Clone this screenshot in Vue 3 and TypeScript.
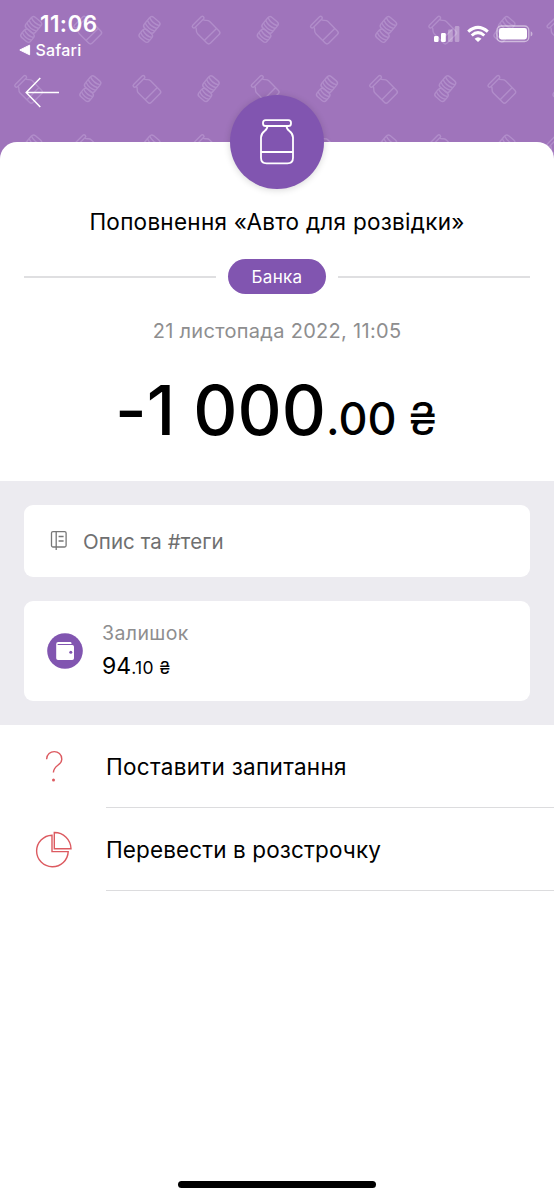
<script setup lang="ts">
interface Mark {
  kind: 'coins' | 'jar'
  x: number
  y: number
}

interface Action {
  id: string
  label: string
}

const marks: Mark[] = []
for (let row = 0; row < 3; row++) {
  for (let col = 0; col < 10; col++) {
    const coins = (row + col) % 2 === 0
    marks.push({
      kind: coins ? 'coins' : 'jar',
      x: (coins ? 31 : 29.3) + col * 59.15,
      y: (coins ? 29.6 : 30.8) + row * 59.2,
    })
  }
}

const actions: Action[] = [
  { id: 'ask', label: 'Поставити запитання' },
  { id: 'split', label: 'Перевести в розстрочку' },
]
</script>

<template>
  <main class="screen">
    <header class="top">
      <svg class="pattern" width="554" height="170" viewBox="0 0 554 170">
        <defs>
          <g id="m-jar">
            <g transform="rotate(-45)">
              <rect x="-7.6" y="-13.8" width="15.2" height="3.2" rx="1.6" />
              <path d="M-5.4 -10.6C-5.4 -7.6 -8.6 -8 -8.6 -4.4V8.8Q-8.6 11.4 -6 11.4H6Q8.6 11.4 8.6 8.8V-4.4C8.6 -8 5.4 -7.6 5.4 -10.6M-8.6 5.2H8.6" />
            </g>
          </g>
          <g id="m-coins">
            <g transform="rotate(40)">
              <rect x="-7.4" y="-12.2" width="12.6" height="14" rx="3" />
              <path d="M-7.4 -9.4Q-1.1 -6.4 5.2 -9.4M-7.4 -5.8Q-1.1 -2.8 5.2 -5.8M-7.4 -2.4Q-1.1 .6 5.2 -2.4" />
              <rect x="-4.8" y="1.8" width="12" height="10.2" rx="3" />
              <path d="M-4.8 4.4Q1.2 7.4 7.2 4.4M-4.8 7.8Q1.2 10.8 7.2 7.8" />
            </g>
          </g>
        </defs>
        <use
          v-for="(m, i) in marks"
          :key="i"
          :href="'#m-' + m.kind"
          :transform="`translate(${m.x} ${m.y})`"
        />
      </svg>
      <div class="status">
        <div class="left">
          <span class="clock">11:06</span>
          <span class="back-app">
            <svg width="12" height="12" viewBox="0 0 12 12"><path d="M.8 6 10.6 1.2V10.8Z" fill="#fff" stroke="#fff" stroke-linejoin="round" /></svg>
            <span>Safari</span>
          </span>
        </div>
        <svg class="indicators" width="100" height="20" viewBox="0 0 100 20">
          <g fill="#fff">
            <rect x="0" y="12" width="4.6" height="6" rx="1.2" />
            <rect x="7" y="9" width="4.8" height="9" rx="1.2" />
            <g opacity=".3">
              <rect x="14" y="5.5" width="4.8" height="12.5" rx="1.2" />
              <rect x="20.8" y="2" width="4.6" height="16" rx="1.2" />
            </g>
            <path d="M40.6 14.7 Q44 11.7 47.5 14.7 L44 18Z" />
            <rect x="65" y="4" width="28" height="11.5" rx="2.4" />
            <path opacity=".45" d="M96.7 7.3 Q98.5 8.2 98.5 9.9 Q98.5 11.6 96.7 12.5Z" />
          </g>
          <g fill="none" stroke="#fff" stroke-width="3">
            <path d="M34.2 7.6 Q44 -.8 53.8 7.6" />
            <path d="M37.7 11.5 Q44 5.8 50.3 11.5" />
          </g>
          <rect x="63" y="2" width="31.8" height="15.5" rx="4.3" fill="none" stroke="#fff" stroke-width="1.3" opacity=".5" />
        </svg>
      </div>
      <svg class="arrow" width="36" height="32" viewBox="0 0 36 32">
        <path d="M34 15.4H1.2M15.3 1 1.2 15.4 15.3 30" fill="none" stroke="#fff" stroke-width="1.5" />
      </svg>
    </header>

    <section class="sheet">
      <div class="badge">
        <svg width="36" height="48" viewBox="0 0 36 48" fill="none" stroke="#fff" stroke-width="1.8">
          <rect x="4" y="2.2" width="28" height="5.8" rx="2.6" />
          <path d="M8.4 8C8.8 13.6 2 12.2 2 19.5V39.8Q2 45.4 7.6 45.4H28.4Q34 45.4 34 39.8V19.5C34 12.2 27.2 13.6 27.6 8M2 34H34" />
        </svg>
      </div>
      <h1 class="title">Поповнення «Авто для розвідки»</h1>
      <div class="category"><span class="rule"></span><span class="pill">Банка</span><span class="rule"></span></div>
      <div class="date">21 листопада 2022, 11:05</div>
      <div class="amount"><span class="whole">-1 000</span><span class="cents">.00</span><span class="currency">₴</span></div>
    </section>

    <section class="details">
      <div class="card note">
        <svg width="18" height="22" viewBox="0 0 18 22" fill="none" stroke="#777" stroke-width="1.3">
          <rect x="1.5" y="1.6" width="14.6" height="15.4" rx="1.5" />
          <path d="M6.2 1.6V20M8.6 6.5H13.6M8.6 11H13.6" />
        </svg>
        <span>Опис та #теги</span>
      </div>
      <div class="card balance">
        <svg width="36" height="36" viewBox="0 0 36 36">
          <circle cx="18" cy="18" r="17.8" fill="#8155b0" />
          <path d="M11.2 9H23.2Q24.5 9 24.5 10.2V11H10.8L10.5 12H25.2Q27 12 27 13.8V25.3Q27 27 25.2 27H11Q9.2 27 9.2 25.3V11Q9.2 9 11.2 9Z" fill="#fff" />
          <circle cx="23.8" cy="19.3" r="1.5" fill="#8155b0" />
        </svg>
        <div>
          <div class="caption">Залишок</div>
          <div class="sum"><span>94</span><span class="minor">.10 ₴</span></div>
        </div>
      </div>
    </section>

    <nav class="actions">
      <div v-for="a in actions" :key="a.id" class="action">
        <svg class="icon" width="40" height="40" viewBox="0 0 40 40" fill="none" stroke="#dc5a60" stroke-width="1.4">
          <template v-if="a.id === 'ask'">
            <path d="M12.6 12.3C12.8 2 27.8 2.2 27.8 12.2C27.8 18.5 19.6 18.2 19.4 25.5" />
            <circle cx="19.5" cy="33" r="1.5" fill="#dc5a60" stroke="none" />
          </template>
          <template v-else>
            <path d="M18 5.2A15.8 15.8 0 1 0 34.2 21.6H18Z" />
            <path d="M20.3 2.5V18.8H37A16.5 16.5 0 0 0 20.3 2.5Z" />
          </template>
        </svg>
        <span :class="['label', a.id]">{{ a.label }}</span>
      </div>
    </nav>
    <div class="home"></div>
  </main>
</template>

<style>
body {
  margin: 0;
  background: #fff;
}
</style>

<style scoped>
.screen {
  position: relative;
  display: flex;
  flex-direction: column;
  width: 554px;
  height: 1200px;
  overflow: hidden;
  background: #fff;
  color: #000;
  font-family: Inter, 'Liberation Sans', sans-serif;
}
svg {
  display: block;
  flex: none;
}
.top {
  position: relative;
  height: 170px;
  margin-bottom: -28px;
  flex: none;
  background: #9f74bb;
  color: #fff;
}
.pattern {
  position: absolute;
  inset: 0;
  fill: none;
  stroke: #b18dca;
  stroke-width: 1.4;
}
.status {
  position: relative;
  display: flex;
  justify-content: space-between;
  padding: 11px 20px 0 19px;
  height: 65px;
  box-sizing: border-box;
}
.clock {
  display: block;
  padding-left: 21px;
  font-size: 22.5px;
  line-height: 26px;
  font-weight: 600;
  letter-spacing: 0.4px;
}
.back-app {
  display: flex;
  align-items: center;
  gap: 4.5px;
  margin-top: 3px;
  font-size: 16px;
  line-height: 20px;
  font-weight: 500;
  letter-spacing: 0.2px;
}
.indicators {
  margin-top: 13px;
}
.arrow {
  position: relative;
  margin: 12px 0 0 25px;
}
.sheet {
  position: relative;
  display: flex;
  flex-direction: column;
  height: 339px;
  flex: none;
  background: #fff;
  border-radius: 17px 17px 0 0;
}
.badge {
  display: flex;
  align-items: center;
  justify-content: center;
  align-self: center;
  width: 94px;
  height: 94px;
  flex: none;
  margin-top: -47px;
  border-radius: 50%;
  background: #8155b0;
  box-shadow: 0 1px 7px rgba(0, 0, 0, 0.16);
}
.title {
  margin: 18px 0 0;
  font-size: 22.5px;
  line-height: 30px;
  font-weight: 400;
  letter-spacing: 0.27px;
  text-align: center;
  white-space: nowrap;
}
.category {
  display: flex;
  align-items: center;
  gap: 12px;
  height: 35px;
  margin: 22px 24px 0;
}
.rule {
  flex: 1;
  height: 2px;
  background: #dfdfe1;
}
.pill {
  width: 98px;
  height: 35px;
  border-radius: 18px;
  background: #8155b0;
  color: #fff;
  font-size: 17px;
  line-height: 36px;
  letter-spacing: 0.3px;
  text-align: center;
}
.date {
  margin-top: 23px;
  color: #8e8e8f;
  font-size: 20px;
  line-height: 28px;
  letter-spacing: 0.3px;
  text-align: center;
}
.amount {
  display: flex;
  align-items: baseline;
  margin: 21px 0 0 115px;
  line-height: 90px;
  font-weight: 500;
  white-space: nowrap;
  font-feature-settings: 'calt' 0;
}
.whole {
  font-size: 68.5px;
}
.cents {
  font-size: 45px;
}
.currency {
  margin-left: 12px;
  font-size: 45px;
  font-weight: 400;
}
.details {
  display: flex;
  flex-direction: column;
  gap: 24px;
  height: 244px;
  flex: none;
  box-sizing: border-box;
  padding: 24px;
  background: #ecebf0;
}
.card {
  display: flex;
  align-items: center;
  box-sizing: border-box;
  border-radius: 9px;
  background: #fff;
}
.note {
  height: 72px;
  padding-left: 26px;
  gap: 15px;
  color: #6f6f70;
  font-size: 20.5px;
  letter-spacing: 0.08px;
}
.balance {
  height: 100px;
  padding-left: 23px;
  gap: 19px;
}
.caption {
  color: #8e8e8f;
  font-size: 19.5px;
  line-height: 32px;
  letter-spacing: 0.4px;
}
.sum {
  font-size: 23px;
  line-height: 34px;
}
.minor {
  font-size: 17.5px;
  letter-spacing: 0.4px;
}
.actions {
  display: flex;
  flex-direction: column;
}
.action {
  display: flex;
  align-items: center;
  height: 83px;
  padding-left: 33.5px;
}
.label {
  flex: 1;
  height: 83px;
  box-sizing: border-box;
  margin-left: 32.5px;
  border-bottom: 1px solid #dcdcde;
  font-size: 22.5px;
  line-height: 83px;
}
.label.ask {
  letter-spacing: 0.3px;
}
.label.split {
  letter-spacing: 0.12px;
}
.home {
  width: 198px;
  height: 7px;
  margin: auto auto 12px;
  border-radius: 4px;
  background: #000;
}
</style>
